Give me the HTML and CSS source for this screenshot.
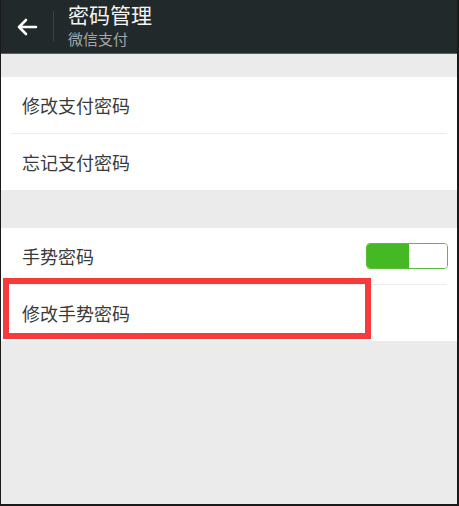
FILE: index.html
```html
<!DOCTYPE html>
<html lang="zh">
<head>
<meta charset="utf-8">
<link rel="stylesheet" href="styles.css">
</head>
<body>
<div class="screen">
  <header class="topbar">
    <div class="back">
      <svg width="22" height="18" viewBox="0 0 22 18"><path d="M20 9H3M10 2L3 9l7 7" fill="none" stroke="#fff" stroke-width="2.6" stroke-linecap="round" stroke-linejoin="round"/></svg>
    </div>
    <div class="sep"></div>
    <div class="titles">
      <div class="title">密码管理</div>
      <div class="subtitle">微信支付</div>
    </div>
  </header>
  <div class="gap gap-top"></div>
  <section class="group">
    <div class="row">修改支付密码</div>
    <div class="divider"></div>
    <div class="row">忘记支付密码</div>
  </section>
  <div class="gap gap-mid"></div>
  <section class="group">
    <div class="row">
      <span>手势密码</span>
      <div class="toggle"><div class="toggle-on"></div><div class="toggle-off"></div></div>
    </div>
    <div class="divider"></div>
    <div class="row row-marked">修改手势密码<div class="mark"></div></div>
  </section>
</div>
</body>
</html>
```
FILE: styles.css
```css
html, body {
  margin: 0;
  padding: 0;
  background: #ebebeb;
}
.screen {
  width: 459px;
  height: 506px;
  box-sizing: border-box;
  border-left: 1px solid #1a1a1a;
  border-right: 2px solid #1a1a1a;
  border-bottom: 2px solid #1a1a1a;
  background: #ebebeb;
  font-family: "Noto Sans CJK SC", "Noto Sans", sans-serif;
  overflow: hidden;
}
.topbar {
  height: 53px;
  background: #22292a;
  border-bottom: 1px solid #5a5f60;
  display: flex;
  align-items: center;
}
.back {
  width: 52px;
  display: flex;
  justify-content: center;
  padding-top: 1px;
}
.sep {
  width: 1px;
  height: 30px;
  background: #3d4344;
  margin-top: -2px;
}
.titles {
  margin-left: 14px;
  align-self: flex-start;
  padding-top: 3px;
  display: flex;
  flex-direction: column;
}
.title {
  color: #f4f4f4;
  font-size: 21px;
  line-height: 22px;
}
.subtitle {
  color: #a3a7a8;
  font-size: 15px;
  line-height: 18px;
  margin-top: 5px;
}
.gap-top { height: 23px; }
.gap-mid { height: 38px; }
.group {
  background: #fff;
}
.row {
  height: 56px;
  display: flex;
  align-items: center;
  justify-content: space-between;
  padding: 0 9px 0 21px;
  font-size: 18px;
  color: #3a3a3a;
  position: relative;
}
.divider {
  height: 1px;
  background: #ececec;
  margin: 0 10px;
}
.toggle {
  width: 82px;
  height: 26px;
  border-radius: 4px;
  border: 1px solid #5ebd3a;
  box-sizing: border-box;
  display: flex;
  overflow: hidden;
}
.toggle-on {
  width: 42px;
  background: #45b923;
}
.toggle-off {
  flex: 1;
  background: #fff;
}
.mark {
  position: absolute;
  left: 2px;
  top: -7px;
  width: 368px;
  height: 61px;
  box-sizing: border-box;
  border: 6px solid #f53b3b;
}
```
